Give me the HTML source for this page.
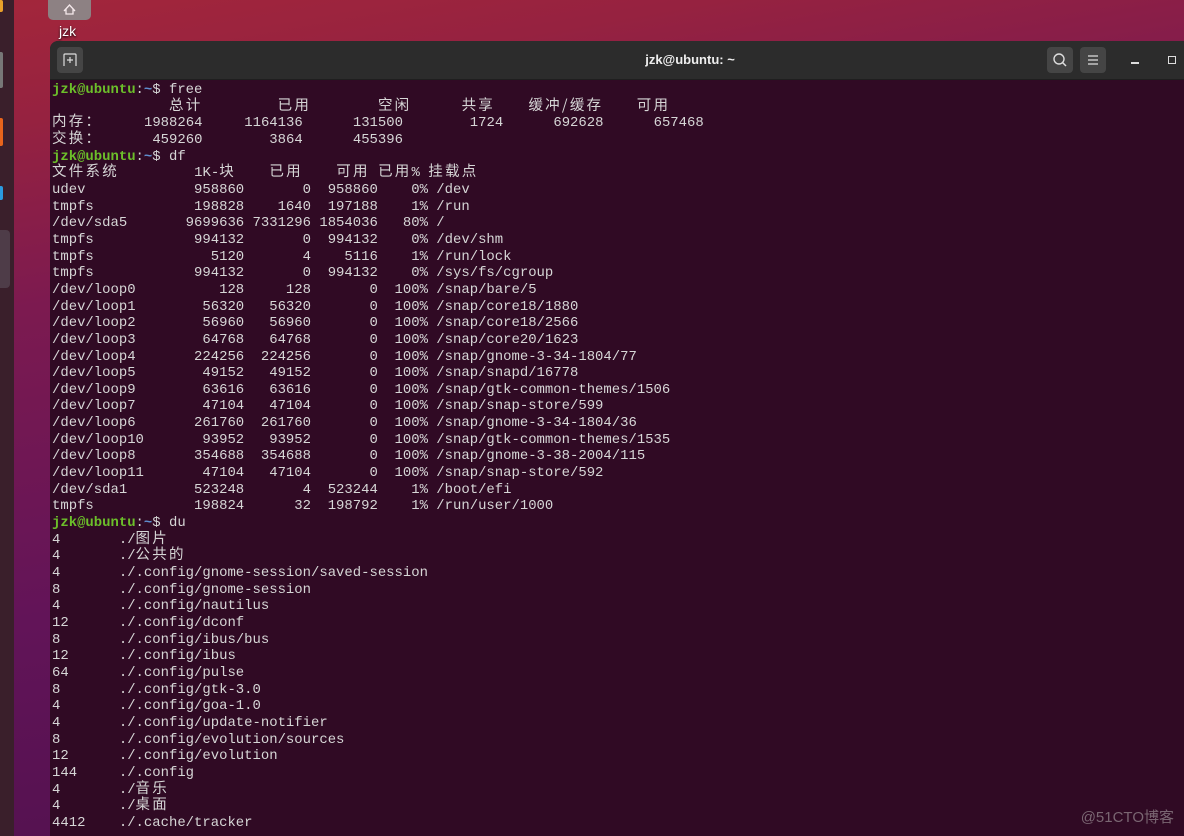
<!DOCTYPE html>
<html><head><meta charset="utf-8"><style>
*{margin:0;padding:0;box-sizing:border-box}
html,body{width:1184px;height:836px;overflow:hidden}
body{background:linear-gradient(170deg,#a3263b 0%,#962240 12%,#7c1a50 30%,#621458 60%,#4a0f4a 100%);position:relative;font-family:"Liberation Sans",sans-serif}
.dock{position:absolute;left:0;top:0;width:14px;height:836px;background:#3a1f2b}
.dk{position:absolute;left:0;width:3px;border-radius:0 2px 2px 0}
.home{position:absolute;left:48px;top:-6px;width:43px;height:26px;background:#8b8b8b;border-radius:5px;opacity:.9}
.lbl{position:absolute;left:59px;top:23px;color:#fff;font-size:14px;text-shadow:0 1px 2px #000}
.win{position:absolute;left:50px;top:41px;width:1140px;height:800px;background:#300a24;border-radius:8px 8px 0 0;overflow:hidden}
.tb{height:39px;background:#2c2c2c;border-bottom:1px solid #1f1f1f;position:relative}
.btn{position:absolute;top:6px;width:26px;height:26px;background:#454545;border-radius:4px}
.title{position:absolute;left:0;width:1280px;top:11px;text-align:center;color:#eee;font-weight:bold;font-size:13px}
pre{font-family:"Liberation Mono",monospace;font-size:13.93px;line-height:16.66px;color:#d6d6d6;padding:2px 0 0 2px;white-space:pre}
.w{font-family:"Noto Sans CJK SC",sans-serif;font-size:14.5px;letter-spacing:2.23px;display:inline-block;height:16.66px;line-height:16.66px;vertical-align:top;position:relative;top:-2px}
.g{color:#6cbf2a;font-weight:bold}.b{color:#5f8fd0;font-weight:bold}
.wm{position:absolute;right:10px;bottom:9px;color:#7a6672;font-size:15px;font-family:"Liberation Sans","Noto Sans CJK SC",sans-serif}
</style></head><body>
<div class="dock">
<div class="dk" style="top:0;height:12px;background:#e9a02a"></div>
<div class="dk" style="top:52px;height:36px;background:#777"></div>
<div class="dk" style="top:118px;height:28px;background:#e8641c"></div>
<div class="dk" style="top:186px;height:14px;background:#2a9be0"></div>
<div style="position:absolute;left:0;top:230px;width:10px;height:58px;background:#4e3c48;border-radius:0 4px 4px 0"></div>
</div>
<div class="home"><svg width="43" height="26" viewBox="0 0 43 26"><path d="M16 17 L21.5 11 L27 17 M18 15 V20 H25 V15" fill="none" stroke="#fff" stroke-width="1.3"/></svg></div>
<div class="lbl">jzk</div>
<div class="win">
<div class="tb">
<div class="btn" style="left:7px"><svg width="26" height="26"><path d="M7 19 V8 Q7 7 8 7 H18 Q19 7 19 8 V19 M10 13 H16 M13 10 V16" fill="none" stroke="#ddd" stroke-width="1.2"/></svg></div>
<div class="title">jzk@ubuntu: ~</div>
<div class="btn" style="left:997px"><svg width="26" height="26"><circle cx="12" cy="12" r="5" fill="none" stroke="#ddd" stroke-width="1.4"/><path d="M15.5 15.5 L19 19" stroke="#ddd" stroke-width="1.5"/></svg></div>
<div class="btn" style="left:1030px"><svg width="26" height="26"><path d="M8 9H18M8 13H18M8 17H18" stroke="#ddd" stroke-width="1.2"/></svg></div>
<div style="position:absolute;left:1081px;top:21px;width:8px;height:1.5px;background:#ddd"></div>
<div style="position:absolute;left:1118px;top:15px;width:8px;height:8px;border:1.5px solid #ddd"></div>
</div>
<pre><span class="g">jzk@ubuntu</span>:<span class="b">~</span>$ free
              <span class="w">总计</span>         <span class="w">已用</span>        <span class="w">空闲</span>      <span class="w">共享</span>    <span class="w">缓冲/缓存</span>    <span class="w">可用</span>
<span class="w">内存：</span>     1988264     1164136      131500        1724      692628      657468
<span class="w">交换：</span>      459260        3864      455396
<span class="g">jzk@ubuntu</span>:<span class="b">~</span>$ df
<span class="w">文件系统</span>         1K-<span class="w">块</span>    <span class="w">已用</span>    <span class="w">可用</span> <span class="w">已用</span>% <span class="w">挂载点</span>
udev             958860       0  958860    0% /dev
tmpfs            198828    1640  197188    1% /run
/dev/sda5       9699636 7331296 1854036   80% /
tmpfs            994132       0  994132    0% /dev/shm
tmpfs              5120       4    5116    1% /run/lock
tmpfs            994132       0  994132    0% /sys/fs/cgroup
/dev/loop0          128     128       0  100% /snap/bare/5
/dev/loop1        56320   56320       0  100% /snap/core18/1880
/dev/loop2        56960   56960       0  100% /snap/core18/2566
/dev/loop3        64768   64768       0  100% /snap/core20/1623
/dev/loop4       224256  224256       0  100% /snap/gnome-3-34-1804/77
/dev/loop5        49152   49152       0  100% /snap/snapd/16778
/dev/loop9        63616   63616       0  100% /snap/gtk-common-themes/1506
/dev/loop7        47104   47104       0  100% /snap/snap-store/599
/dev/loop6       261760  261760       0  100% /snap/gnome-3-34-1804/36
/dev/loop10       93952   93952       0  100% /snap/gtk-common-themes/1535
/dev/loop8       354688  354688       0  100% /snap/gnome-3-38-2004/115
/dev/loop11       47104   47104       0  100% /snap/snap-store/592
/dev/sda1        523248       4  523244    1% /boot/efi
tmpfs            198824      32  198792    1% /run/user/1000
<span class="g">jzk@ubuntu</span>:<span class="b">~</span>$ du
4       ./<span class="w">图片</span>
4       ./<span class="w">公共的</span>
4       ./.config/gnome-session/saved-session
8       ./.config/gnome-session
4       ./.config/nautilus
12      ./.config/dconf
8       ./.config/ibus/bus
12      ./.config/ibus
64      ./.config/pulse
8       ./.config/gtk-3.0
4       ./.config/goa-1.0
4       ./.config/update-notifier
8       ./.config/evolution/sources
12      ./.config/evolution
144     ./.config
4       ./<span class="w">音乐</span>
4       ./<span class="w">桌面</span>
4412    ./.cache/tracker</pre>
</div>
<div class="wm">@51CTO博客</div>
</body></html>
